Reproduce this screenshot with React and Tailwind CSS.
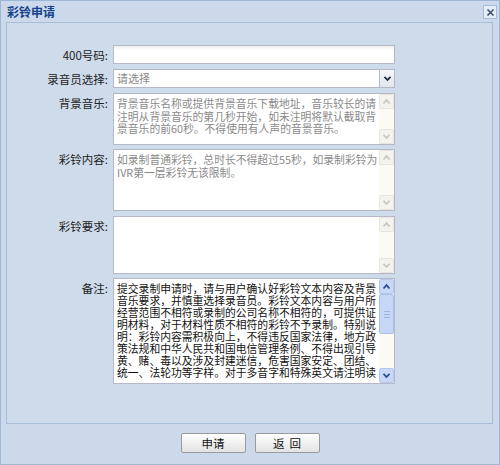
import React from "react";

const font = { fontFamily: '"Noto Sans CJK SC", "Liberation Sans", sans-serif' };

const Chevron = ({ up, color }) => (
  <svg width="9" height="7" viewBox="0 0 9 7">
    <path
      d={up ? "M1.5 5.5 L4.5 2.2 L7.5 5.5" : "M1.5 1.8 L4.5 5 L7.5 1.8"}
      fill="none"
      stroke={color}
      strokeWidth="1.8"
    />
  </svg>
);

const ScrollBar = ({ active }) => (
  <div className="w-[15px] shrink-0 flex flex-col justify-between bg-[#fbfbf4]">
    <div
      className={
        active
          ? "h-[15px] flex items-center justify-center bg-[#c8d8f6] border border-[#b4c8ee] rounded-[2px]"
          : "h-[15px] flex items-center justify-center bg-[#f4f4ee] border border-[#e6e6dc] rounded-[2px]"
      }
    >
      <Chevron up color={active ? "#2c4d8c" : "#c9c9bf"} />
    </div>
    {active ? (
      <div className="flex-1 flex flex-col">
        <div className="h-[40px] bg-[#c6d6f6] border border-[#a9c0ec] rounded-[2px] flex flex-col items-center justify-center gap-[2px]">
          <div className="w-[6px] h-px bg-[#9fb6e4]"></div>
          <div className="w-[6px] h-px bg-[#9fb6e4]"></div>
          <div className="w-[6px] h-px bg-[#9fb6e4]"></div>
        </div>
      </div>
    ) : null}
    <div
      className={
        active
          ? "h-[15px] flex items-center justify-center bg-[#c8d8f6] border border-[#b4c8ee] rounded-[2px]"
          : "h-[15px] flex items-center justify-center bg-[#f4f4ee] border border-[#e6e6dc] rounded-[2px]"
      }
    >
      <Chevron color={active ? "#2c4d8c" : "#c9c9bf"} />
    </div>
  </div>
);

const Area = ({ box, lines, dark, active }) => (
  <div className={"w-[282px] flex border border-[#b5b8c8] bg-white overflow-hidden " + box}>
    <div
      className={
        dark
          ? "flex-1 overflow-hidden pl-[3px] pt-[3px] text-[10.8px] leading-[12px] text-[#111] whitespace-nowrap"
          : "flex-1 overflow-hidden pl-[3px] pt-[3px] text-[10.8px] leading-[12.5px] text-[#8a8a8a] whitespace-nowrap"
      }
    >
      {lines.map((l, i) => (
        <div key={i}>{l}</div>
      ))}
    </div>
    <ScrollBar active={active} />
  </div>
);

const Label = ({ children, top }) => (
  <div
    className={
      top
        ? "w-[101px] shrink-0 text-right text-[11.5px] text-[#222] pt-[3px] leading-[14px]"
        : "w-[101px] shrink-0 text-right text-[11.5px] text-[#222] leading-[14px]"
    }
  >
    {children}
  </div>
);

const Button = ({ children }) => (
  <button className="w-[65px] h-[20px] border border-[#9a9a9a] rounded-[2px] bg-gradient-to-b from-white to-[#e2e2e2] text-[11.5px] text-[#111] leading-[18px] whitespace-pre">
    {children}
  </button>
);

export default function App() {
  return (
    <div
      style={font}
      className="w-[500px] h-[465px] bg-[#cbd9ea] border border-[#9fb7d6] flex flex-col"
    >
      <div className="h-[21px] shrink-0 flex items-center justify-between pl-[6px] pr-[2px]">
        <span className="text-[12px] font-bold text-[#15428b]">彩铃申请</span>
        <div className="w-[14px] h-[14px] mt-[1px] border border-[#a6bcd8] bg-[#e4ecf6] flex items-center justify-center">
          <svg width="9" height="9" viewBox="0 0 9 9">
            <path d="M1.5 1.5 L7.5 7.5 M7.5 1.5 L1.5 7.5" stroke="#3a4e6e" strokeWidth="1.6" />
          </svg>
        </div>
      </div>

      <div className="ml-[5px] w-[487px] h-[402px] shrink-0 border border-[#a8bdd8] bg-[#cedbeb] pt-[22px] flex flex-col">
        <div className="flex items-center gap-[5px]">
          <Label>400号码:</Label>
          <div className="w-[282px] h-[19px] border border-[#b5b8c8] bg-gradient-to-b from-[#eeeeee] to-white to-[25%]"></div>
        </div>

        <div className="flex items-center gap-[5px] mt-[5px]">
          <Label>录音员选择:</Label>
          <div className="w-[282px] h-[19px] border border-[#b5b8c8] bg-white flex">
            <div className="flex-1 pl-[3px] text-[11px] leading-[17px] text-[#8a8a8a]">请选择</div>
            <div className="w-[15px] border-l border-[#b5b8c8] bg-gradient-to-b from-[#f4f7fb] to-[#dfe6ee] flex items-center justify-center">
              <Chevron color="#1d2c44" />
            </div>
          </div>
        </div>

        <div className="flex items-start gap-[5px] mt-[5px]">
          <Label top>背景音乐:</Label>
          <Area
            box="h-[52px]"
            lines={[
              "背景音乐名称或提供背景音乐下载地址，音乐较长的请",
              "注明从背景音乐的第几秒开始，如未注明将默认截取背",
              "景音乐的前60秒。不得使用有人声的音景音乐。",
            ]}
          />
        </div>

        <div className="flex items-start gap-[5px] mt-[4px]">
          <Label top>彩铃内容:</Label>
          <Area
            box="h-[62px]"
            lines={["如录制普通彩铃，总时长不得超过55秒，如录制彩铃为", "IVR第一层彩铃无该限制。"]}
          />
        </div>

        <div className="flex items-start gap-[5px] mt-[5px]">
          <Label top>彩铃要求:</Label>
          <Area box="h-[58px]" lines={[]} />
        </div>

        <div className="flex items-start gap-[5px] mt-[4px]">
          <Label top>备注:</Label>
          <Area
            box="h-[106px]"
            dark
            active
            lines={[
              "提交录制申请时，请与用户确认好彩铃文本内容及背景",
              "音乐要求，并慎重选择录音员。彩铃文本内容与用户所",
              "经营范围不相符或录制的公司名称不相符的，可提供证",
              "明材料，对于材料性质不相符的彩铃不予录制。特别说",
              "明：彩铃内容需积极向上，不得违反国家法律，地方政",
              "策法规和中华人民共和国电信管理条例、不得出现引导",
              "黄、赌、毒以及涉及封建迷信，危害国家安定、团结、",
              "统一、法轮功等字样。对于多音字和特殊英文请注明读",
            ]}
          />
        </div>
      </div>

      <div className="flex justify-center gap-[9px] pt-[9px]">
        <Button>申请</Button>
        <Button>{"返  回"}</Button>
      </div>
    </div>
  );
}
